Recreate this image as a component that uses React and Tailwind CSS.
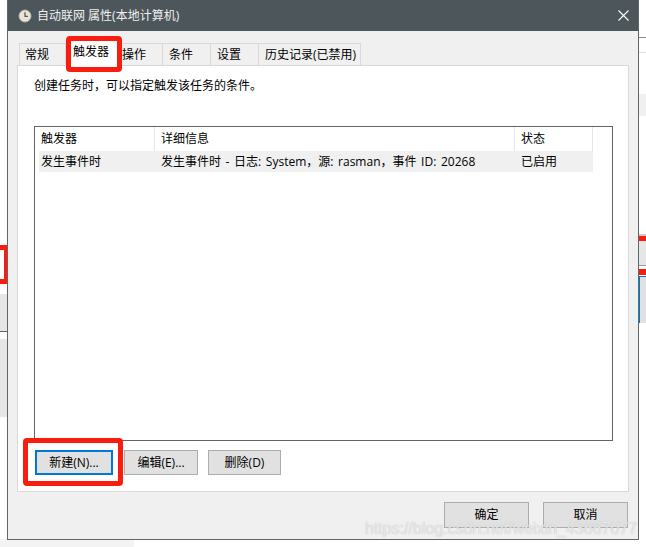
function Btn({ children, className = "" }) {
  return (
    <div className={"flex items-center justify-center bg-[#e1e1e1] border border-[#adadad] text-[12px] text-black " + className}>
      {children}
    </div>
  );
}
function Tab({ children, className = "" }) {
  return (
    <div className={"h-[22px] flex items-center bg-[#f0f0f0] border border-b-0 border-[#d9d9d9] text-[12px] whitespace-nowrap " + className}>
      {children}
    </div>
  );
}
function RedBox({ className }) {
  return <div className={"absolute border-[5px] border-[#fb1c10] rounded-[4px] " + className} />;
}
export default function App() {
  return (
    <div className="relative w-[646px] h-[547px] overflow-hidden bg-white text-black font-['Open_Sans','Noto_Sans_CJK_SC',sans-serif]">
      {/* Desktop fragments behind the dialog */}
      <div className="absolute left-0 top-[245px] w-[7px] h-[39px] bg-white border-y-[5px] border-l-0 border-[#fb1c10]" />
      <div className="absolute left-[4px] top-[245px] w-[3px] h-[39px] bg-[#fb1c10]" />
      <div className="absolute left-0 top-[294px] w-[7px] h-[38px] bg-[#e6e6e6] border-b border-[#666]" />
      <div className="absolute left-0 top-[339px] w-[7px] h-[78px] bg-[#e6e6e6]" />
      <div className="absolute left-0 top-[539px] w-[134px] h-[8px] bg-[#f3f3f3]" />
      <div className="absolute left-[639px] top-[37px] w-[7px] h-px bg-[#8a8a8a]" />
      <div className="absolute left-[639px] top-[52px] w-[7px] h-px bg-[#dddddd]" />
      <div className="absolute left-[639px] top-[94px] w-[7px] h-[22px] bg-[#f0f0f0]" />
      <div className="absolute left-[639px] top-[234px] w-[7px] h-[32px] bg-[#e6e6e6] border-t-[2px] border-b border-t-[#cccccc] border-b-[#999]" />
      <div className="absolute left-[639px] top-[236px] w-[7px] h-[5px] bg-[#fb1c10]" />
      <div className="absolute left-[639px] top-[269px] w-[7px] h-[6px] bg-[#fb1c10]" />
      <div className="absolute left-[639px] top-[276px] w-[7px] h-[47px] bg-[#e1e1e1] border-l border-t border-[#0078d7] border-b-[#555]" />

      {/* Dialog */}
      <div className="absolute left-[7px] top-0 w-[632px] h-[540px] border border-t-0 border-[#5f6769] bg-[#f0f0f0] flex flex-col">
        <div className="h-[31px] shrink-0 bg-[#4d565b] flex items-center pl-[10px] pr-[9px] text-[12px] text-[#f0f0f0]">
          <svg width="14" height="14" viewBox="0 0 14 14" className="mr-[5px]">
            <circle cx="7" cy="7" r="6" fill="#e8e4d8" stroke="#b9b6a8" strokeWidth="1" />
            <path d="M7 3.2V7.4H10" fill="none" stroke="#5a5a5a" strokeWidth="1.3" />
          </svg>
          <span>自动联网 属性(本地计算机)</span>
          <svg width="11" height="11" viewBox="0 0 11 11" className="ml-auto">
            <path d="M.5.5l10 10M10.5.5l-10 10" stroke="#ffffff" strokeWidth="1.1" fill="none" />
          </svg>
        </div>
        <div className="flex h-[22px] mt-[12px] ml-[11px] shrink-0">
          <Tab className="w-[47px] pl-[5px]">常规</Tab>
          <div className="w-[56px]" />
          <Tab className="w-[41px] border-l-0">操作</Tab>
          <Tab className="w-[48px] border-l-0 pl-[6px]">条件</Tab>
          <Tab className="w-[48px] border-l-0 pl-[6px]">设置</Tab>
          <Tab className="w-[102px] border-l-0 pl-[6px]">历史记录(已禁用)</Tab>
        </div>
        <div className="mx-[9px] h-[427px] shrink-0 bg-white border border-[#d9d9d9] flex flex-col pl-[16px] pr-[15px]">
          <p className="text-[12px] leading-[16px] mt-[12px]">创建任务时，可以指定触发该任务的条件。</p>
          <div className="mt-[32px] h-[315px] border border-[#646464] flex flex-col text-[12px]">
            <div className="h-[24px] flex shrink-0">
              <div className="w-[120px] pl-[6px] leading-[23px] border-r border-[#e5e5e5]">触发器</div>
              <div className="w-[360px] pl-[6px] leading-[23px] border-r border-[#e5e5e5]">详细信息</div>
              <div className="w-[78px] pl-[6px] leading-[23px] border-r border-[#e5e5e5]">状态</div>
            </div>
            <div className="h-[21px] ml-[4px] w-[554px] flex bg-[#f0f0f0] leading-[21px] shrink-0">
              <div className="w-[116px] pl-[2px]">发生事件时</div>
              <div className="w-[360px] pl-[6px] whitespace-nowrap [word-spacing:1.5px]">发生事件时 - 日志: System，源: rasman，事件 ID: 20268</div>
              <div className="pl-[6px]">已启用</div>
            </div>
          </div>
          <div className="flex mt-[9px]">
            <Btn className="h-[25px] w-[78px] ml-[1px] !border-[2px] !border-[#0078d7]">新建(N)...</Btn>
            <Btn className="h-[25px] w-[74px] ml-[11px]">编辑(E)...</Btn>
            <Btn className="h-[25px] w-[73px] ml-[10px]">删除(D)</Btn>
          </div>
        </div>
        <div className="flex justify-end gap-[14px] mt-[10px] mr-[10px]">
          <Btn className="h-[26px] w-[85px]">确定</Btn>
          <Btn className="h-[26px] w-[85px]">取消</Btn>
        </div>
      </div>

      {/* Red annotations */}
      <RedBox className="left-[66px] top-[36px] w-[56px] h-[36px] bg-white" />
      <div className="absolute left-[73px] top-[44px] text-[12px] leading-[16px]">触发器</div>
      <RedBox className="left-[23px] top-[438px] w-[100px] h-[48px]" />

      {/* Watermark */}
      <div className="absolute left-[365px] top-[518px] text-[16px] leading-[22px] whitespace-nowrap text-white/70 [text-shadow:0_0_1px_#aaa] font-['Liberation_Sans',sans-serif]">https://blog.csdn.net/weixin_43667077</div>
    </div>
  );
}
